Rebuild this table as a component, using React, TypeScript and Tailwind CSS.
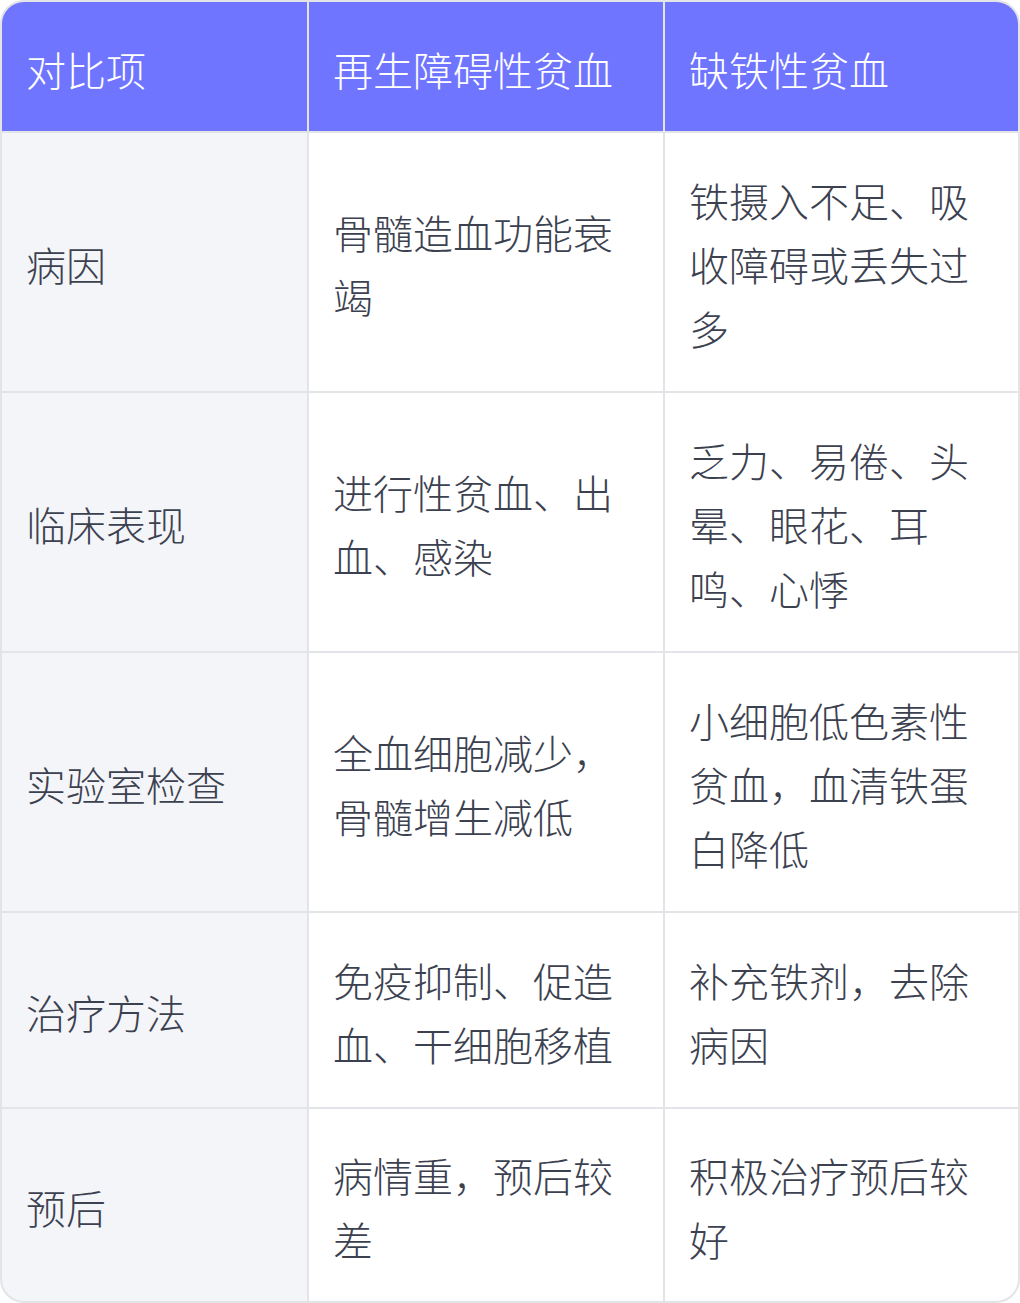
import React from "react";

const rows: [string, string, string][] = [
  ["病因", "骨髓造血功能衰竭", "铁摄入不足、吸收障碍或丢失过多"],
  ["临床表现", "进行性贫血、出血、感染", "乏力、易倦、头晕、眼花、耳鸣、心悸"],
  ["实验室检查", "全血细胞减少，骨髓增生减低", "小细胞低色素性贫血，血清铁蛋白降低"],
  ["治疗方法", "免疫抑制、促造血、干细胞移植", "补充铁剂，去除病因"],
  ["预后", "病情重，预后较差", "积极治疗预后较好"],
];

export default function App() {
  return (
    <div
      className="w-[1020px] bg-white font-light"
      style={{ fontFamily: '"Noto Sans CJK SC", "Noto Sans", sans-serif' }}
    >
      <div className="rounded-[24px] border-2 border-[#e3e4e8] bg-[#e3e4e8] overflow-hidden">
        <div className="grid grid-cols-[305px_354px_353px] gap-[2px] text-[40px] leading-[64px]">
          {["对比项", "再生障碍性贫血", "缺铁性贫血"].map((h) => (
            <div key={h} className="bg-[#6f75ff] text-white px-[24px] pt-[35px] pb-[30px]">
              {h}
            </div>
          ))}
          {rows.map((r, i) => {
            const py = i === rows.length - 1 ? "pt-[34px] pb-[30px]" : "pt-[35px] pb-[31px]";
            return (
              <React.Fragment key={i}>
                <div className={`bg-[#f4f5f9] text-[#3c4150] px-[24px] ${py} flex items-center`}>{r[0]}</div>
                <div className={`bg-white text-[#3c4150] px-[24px] ${py} flex items-center`}>{r[1]}</div>
                <div className={`bg-white text-[#3c4150] px-[24px] ${py} flex items-center`}>{r[2]}</div>
              </React.Fragment>
            );
          })}
        </div>
      </div>
    </div>
  );
}
